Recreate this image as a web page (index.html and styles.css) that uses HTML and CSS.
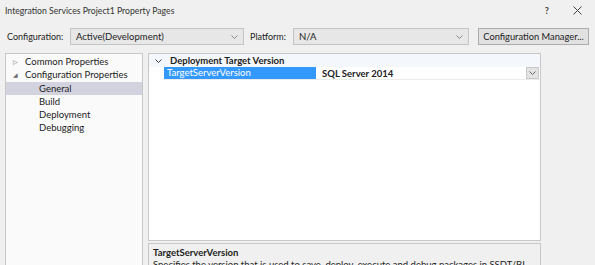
FILE: index.html
```html
<!DOCTYPE html>
<html lang="en">
<head>
  <meta charset="UTF-8" />
  <title>Integration Services Project1 Property Pages</title>
  <link rel="stylesheet" href="styles.css">
</head>
<body>
  <div class="dialog">
    <div class="title-bar">
      <span class="title">Integration Services Project1 Property Pages</span>
      <span class="title-buttons">
        <span class="help">?</span>
        <svg class="close" width="9" height="9" viewBox="0 0 9 9"><path d="M0.5 0.5L8.5 8.5M8.5 0.5L0.5 8.5" stroke="#444" stroke-width="1"/></svg>
      </span>
    </div>

    <div class="toolbar">
      <label class="config-label">Configuration:</label>
      <div class="combo combo-config">
        <span>Active(Development)</span>
        <svg width="7" height="4" viewBox="0 0 7 4"><path d="M0.5 0.5L3.5 3.5L6.5 0.5" fill="none" stroke="#888"/></svg>
      </div>
      <label class="platform-label">Platform:</label>
      <div class="combo combo-platform">
        <span>N/A</span>
        <svg width="7" height="4" viewBox="0 0 7 4"><path d="M0.5 0.5L3.5 3.5L6.5 0.5" fill="none" stroke="#888"/></svg>
      </div>
      <button class="config-manager">Configuration Manager...</button>
    </div>

    <div class="content">
      <!-- left navigation tree -->
      <div class="tree">
        <div class="tree-row"><span class="arrow">&#9655;</span>Common Properties</div>
        <div class="tree-row"><span class="arrow">&#9698;</span>Configuration Properties</div>
        <div class="tree-row child selected">General</div>
        <div class="tree-row child">Build</div>
        <div class="tree-row child">Deployment</div>
        <div class="tree-row child">Debugging</div>
      </div>

      <!-- property grid -->
      <div class="props">
        <div class="grid">
          <div class="category">
            <svg width="7" height="4" viewBox="0 0 7 4"><path d="M0.5 0.5L3.5 3.5L6.5 0.5" fill="none" stroke="#444"/></svg>
            <span>Deployment Target Version</span>
          </div>
          <div class="prop-row">
            <div class="prop-name">TargetServerVersion</div>
            <div class="prop-value">
              <span>SQL Server 2014</span>
              <span class="drop-btn">
                <svg width="7" height="4" viewBox="0 0 7 4"><path d="M0.5 0.5L3.5 3.5L6.5 0.5" fill="none" stroke="#666"/></svg>
              </span>
            </div>
          </div>
        </div>
        <div class="description">
          <div class="desc-title">TargetServerVersion</div>
          <div class="desc-text">Specifies the version that is used to save, deploy, execute and debug packages in SSDT/BI.</div>
        </div>
      </div>
    </div>
  </div>
</body>
</html>
```
FILE: styles.css
```css
body {
  margin: 0;
  padding: 0;
  background-color: #f0f0f0;
  font-family: Lato, "Noto Sans", sans-serif;
  font-size: 9.5px;
  color: #222;
  overflow: hidden;
}

.dialog {
  width: 595px;
  height: 265px;
  overflow: hidden;
}

.title-bar {
  height: 20px;
  display: flex;
  align-items: center;
  justify-content: space-between;
  padding: 0 13px 0 5px;
}

.title {
  font-size: 8.7px;
  color: #333;
}

.title-buttons {
  display: flex;
  align-items: center;
  gap: 24px;
}

.help {
  font-size: 9px;
  font-weight: bold;
  color: #444;
}

.toolbar {
  display: flex;
  align-items: center;
  height: 17px;
  margin-top: 8px;
  padding-left: 7px;
}

.config-label {
  width: 63px;
  font-size: 9px;
}

.combo {
  height: 17px;
  display: flex;
  align-items: center;
  justify-content: space-between;
  padding: 0 5px 0 5px;
  background-color: #e7e7e7;
  border: 1px solid #c4c4c4;
  box-sizing: border-box;
}

.combo-config {
  width: 174px;
}

.platform-label {
  margin-left: 6px;
  width: 43px;
  font-size: 9px;
}

.combo-platform {
  width: 176px;
}

.config-manager {
  margin-left: 9px;
  width: 111px;
  height: 17px;
  padding: 0;
  white-space: nowrap;
  font-family: inherit;
  font-size: 9.3px;
  color: #222;
  background-color: #e1e1e1;
  border: 1px solid #adadad;
}

.content {
  display: flex;
  margin-top: 8px;
  padding-left: 5px;
  height: 230px;
}

.tree {
  width: 136px;
  background-color: #fafafa;
  border: 1px solid #c8c8c8;
  padding-top: 1px;
}

.tree-row {
  height: 13.3px;
  line-height: 13.3px;
  padding-left: 7px;
  white-space: nowrap;
}

.arrow {
  display: inline-block;
  width: 12px;
  font-size: 6px;
  color: #666;
  vertical-align: top;
}

.tree-row.child {
  padding-left: 33px;
}

.tree-row.selected {
  background-color: #d3d3df;
}

.props {
  margin-left: 5px;
  width: 393px;
  display: flex;
  flex-direction: column;
}

.grid {
  height: 186px;
  background-color: #fff;
  border: 1px solid #c8c8c8;
}

.category {
  height: 13px;
  display: flex;
  align-items: center;
  gap: 8px;
  padding-left: 6px;
  font-weight: bold;
  background-color: #f4f7fb;
}

.prop-row {
  display: flex;
  height: 12px;
  margin-left: 15px;
  border-bottom: 1px solid #ececec;
}

.prop-name {
  width: 149px;
  padding-left: 3px;
  line-height: 12px;
  background-color: #3399ff;
  color: #fff;
}

.prop-value {
  flex: 1;
  display: flex;
  justify-content: space-between;
  align-items: center;
  padding-left: 6px;
  font-weight: bold;
}

.drop-btn {
  width: 11px;
  height: 10px;
  display: flex;
  align-items: center;
  justify-content: center;
  background-color: #e3e3e3;
  border: 1px solid #c8c8c8;
  margin-right: 1px;
}

.description {
  flex: 1;
  margin-top: 2px;
  border: 1px solid #c8c8c8;
  border-bottom: none;
  padding: 3px 4px;
}

.desc-title {
  font-weight: bold;
  line-height: 12px;
}

.desc-text {
  line-height: 12px;
  white-space: nowrap;
}
```
